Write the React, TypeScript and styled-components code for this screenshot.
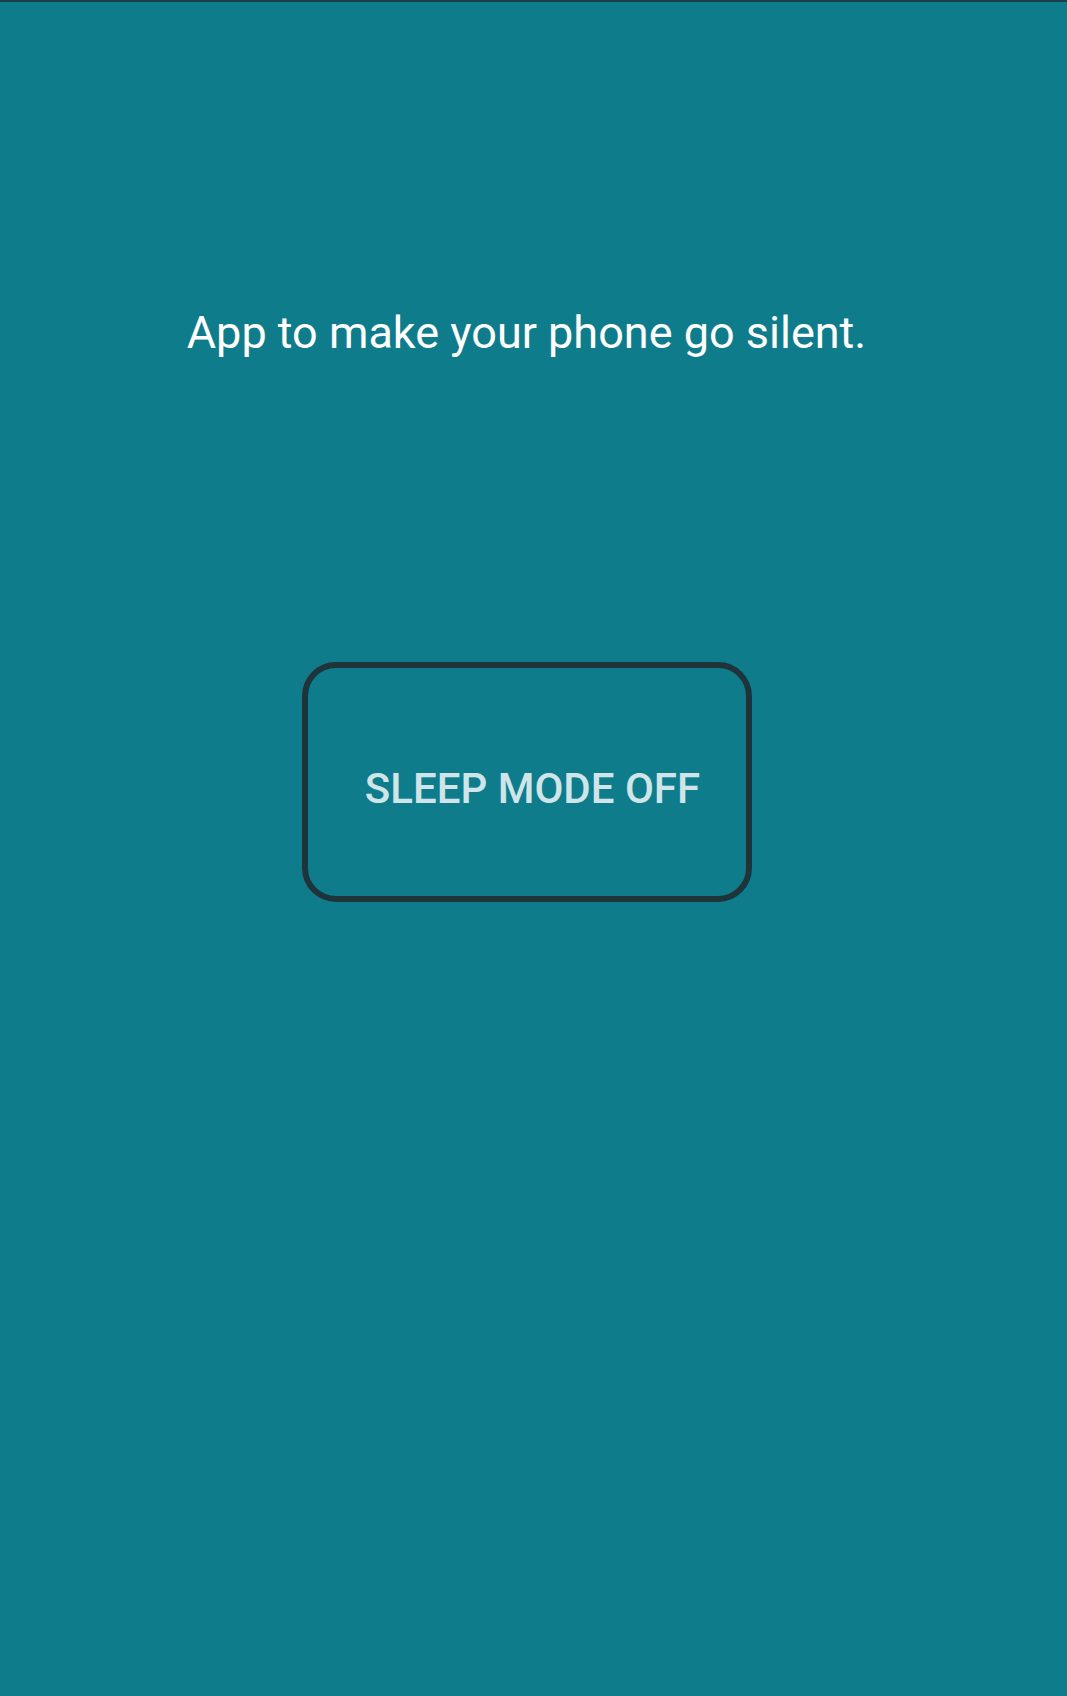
import React from "react";
import styled, { createGlobalStyle } from "styled-components";

const Global = createGlobalStyle`
  html, body {
    margin: 0;
    padding: 0;
    background: #0f7c8c;
  }
  * { box-sizing: border-box; }
`;

const Screen = styled.div`
  width: 1067px;
  height: 1696px;
  background: #0f7c8c;
  border-top: 2px solid #1b3f48;
  display: flex;
  flex-direction: column;
  align-items: center;
  font-family: Roboto, "Noto Sans", sans-serif;
`;

const Title = styled.p`
  margin: 305px 0 0 0;
  padding-right: 14px;
  font-size: 45px;
  font-weight: 400;
  line-height: 52px;
  color: #ffffff;
`;

const SleepButton = styled.button`
  margin-top: 303px;
  margin-right: 14px;
  width: 450px;
  height: 240px;
  border: 6px solid #1f343a;
  border-radius: 34px;
  background: transparent;
  display: flex;
  align-items: center;
  justify-content: center;
  padding: 13px 0 0 12px;
  font-family: Roboto, "Noto Sans", sans-serif;
  font-size: 42px;
  font-weight: 500;
  color: #cfe5ea;
  cursor: pointer;
`;

export default function App() {
  return (
    <>
      <Global />
      <Screen>
        <Title>App to make your phone go silent.</Title>
        <SleepButton>SLEEP MODE OFF</SleepButton>
      </Screen>
    </>
  );
}
